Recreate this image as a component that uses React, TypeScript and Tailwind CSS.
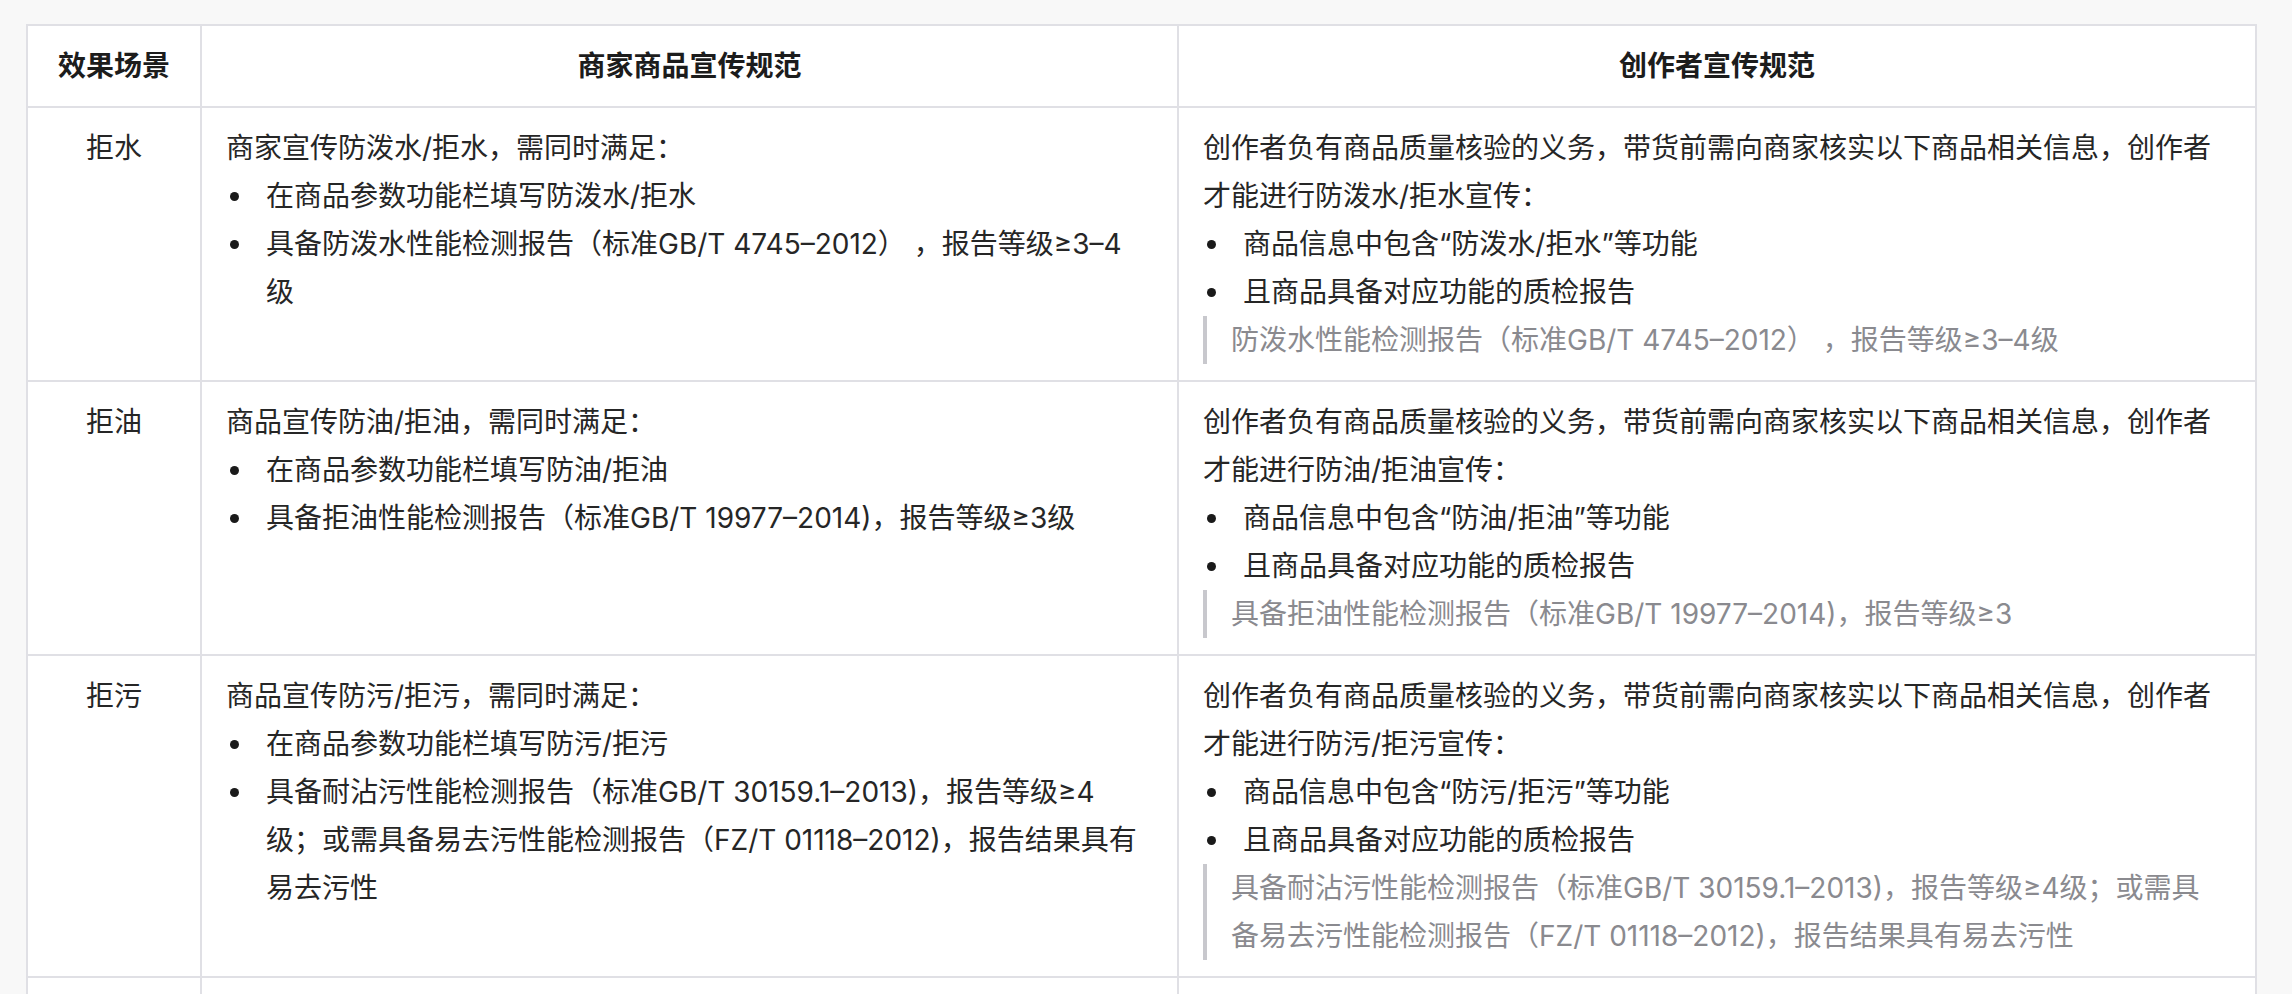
type Row = {
  scene: string;
  intro: string;
  items: string[];
  keyword: string;
  quote: string;
};

// line breaks follow the wrap points of the source page
const rows: Row[] = [
  {
    scene: '拒水',
    intro: '商家宣传防泼水/拒水，需同时满足：',
    items: [
      '在商品参数功能栏填写防泼水/拒水',
      '具备防泼水性能检测报告（标准GB/T 4745–2012） ，报告等级≥3–4\n级',
    ],
    keyword: '防泼水/拒水',
    quote: '防泼水性能检测报告（标准GB/T 4745–2012） ，报告等级≥3–4级',
  },
  {
    scene: '拒油',
    intro: '商品宣传防油/拒油，需同时满足：',
    items: ['在商品参数功能栏填写防油/拒油', '具备拒油性能检测报告（标准GB/T 19977–2014)，报告等级≥3级'],
    keyword: '防油/拒油',
    quote: '具备拒油性能检测报告（标准GB/T 19977–2014)，报告等级≥3',
  },
  {
    scene: '拒污',
    intro: '商品宣传防污/拒污，需同时满足：',
    items: [
      '在商品参数功能栏填写防污/拒污',
      '具备耐沾污性能检测报告（标准GB/T 30159.1–2013)，报告等级≥4\n级；或需具备易去污性能检测报告（FZ/T 01118–2012)，报告结果具有\n易去污性',
    ],
    keyword: '防污/拒污',
    quote:
      '具备耐沾污性能检测报告（标准GB/T 30159.1–2013)，报告等级≥4级；或需具\n备易去污性能检测报告（FZ/T 01118–2012)，报告结果具有易去污性',
  },
];

function Bullets({ items }: { items: string[] }) {
  return (
    <ul>
      {items.map((t, i) => (
        <li key={i} className="flex">
          <span className="flex h-[48px] w-[40px] shrink-0 items-center">
            <span className="ml-[4px] h-[9px] w-[9px] rounded-full bg-[#1a1a1a]" />
          </span>
          <span className="min-w-0 flex-1 whitespace-pre-line">{t}</span>
        </li>
      ))}
    </ul>
  );
}

const cell = 'border-r-2 border-b-2 border-[#e0e0e5] px-6 py-4';

export default function App() {
  return (
    <main
      className="min-h-screen bg-[#f8f8f8] pl-[26px] pt-[24px] text-[28px] leading-[48px] text-[#262626]"
      style={{ fontFamily: 'Inter, "Noto Sans CJK SC", sans-serif' }}
    >
      <div className="grid w-[2231px] grid-cols-[174px_977px_1078px] border-t-2 border-l-2 border-[#e0e0e5] bg-white">
        {/* header */}
        <div className={`${cell} text-center font-semibold text-[#1c1c1c]`}>效果场景</div>
        <div className={`${cell} text-center font-semibold text-[#1c1c1c]`}>商家商品宣传规范</div>
        <div className={`${cell} text-center font-semibold text-[#1c1c1c]`}>创作者宣传规范</div>

        {rows.map((r) => (
          <div key={r.scene} className="contents">
            <div className={`${cell} text-center`}>{r.scene}</div>
            <div className={cell}>
              <p>{r.intro}</p>
              <Bullets items={r.items} />
            </div>
            <div className={cell}>
              <p>
                创作者负有商品质量核验的义务，带货前需向商家核实以下商品相关信息，创作者才能进行{r.keyword}宣传：
              </p>
              <Bullets items={[`商品信息中包含“${r.keyword}”等功能`, '且商品具备对应功能的质检报告']} />
              <blockquote className="whitespace-pre-line border-l-4 border-[#c8c8cd] pl-6 text-[#8a8a8f]">
                {r.quote}
              </blockquote>
            </div>
          </div>
        ))}

        {/* next row, cut off by the viewport */}
        <div className={`${cell} h-[120px]`} />
        <div className={`${cell} h-[120px]`} />
        <div className={`${cell} h-[120px]`} />
      </div>
    </main>
  );
}
